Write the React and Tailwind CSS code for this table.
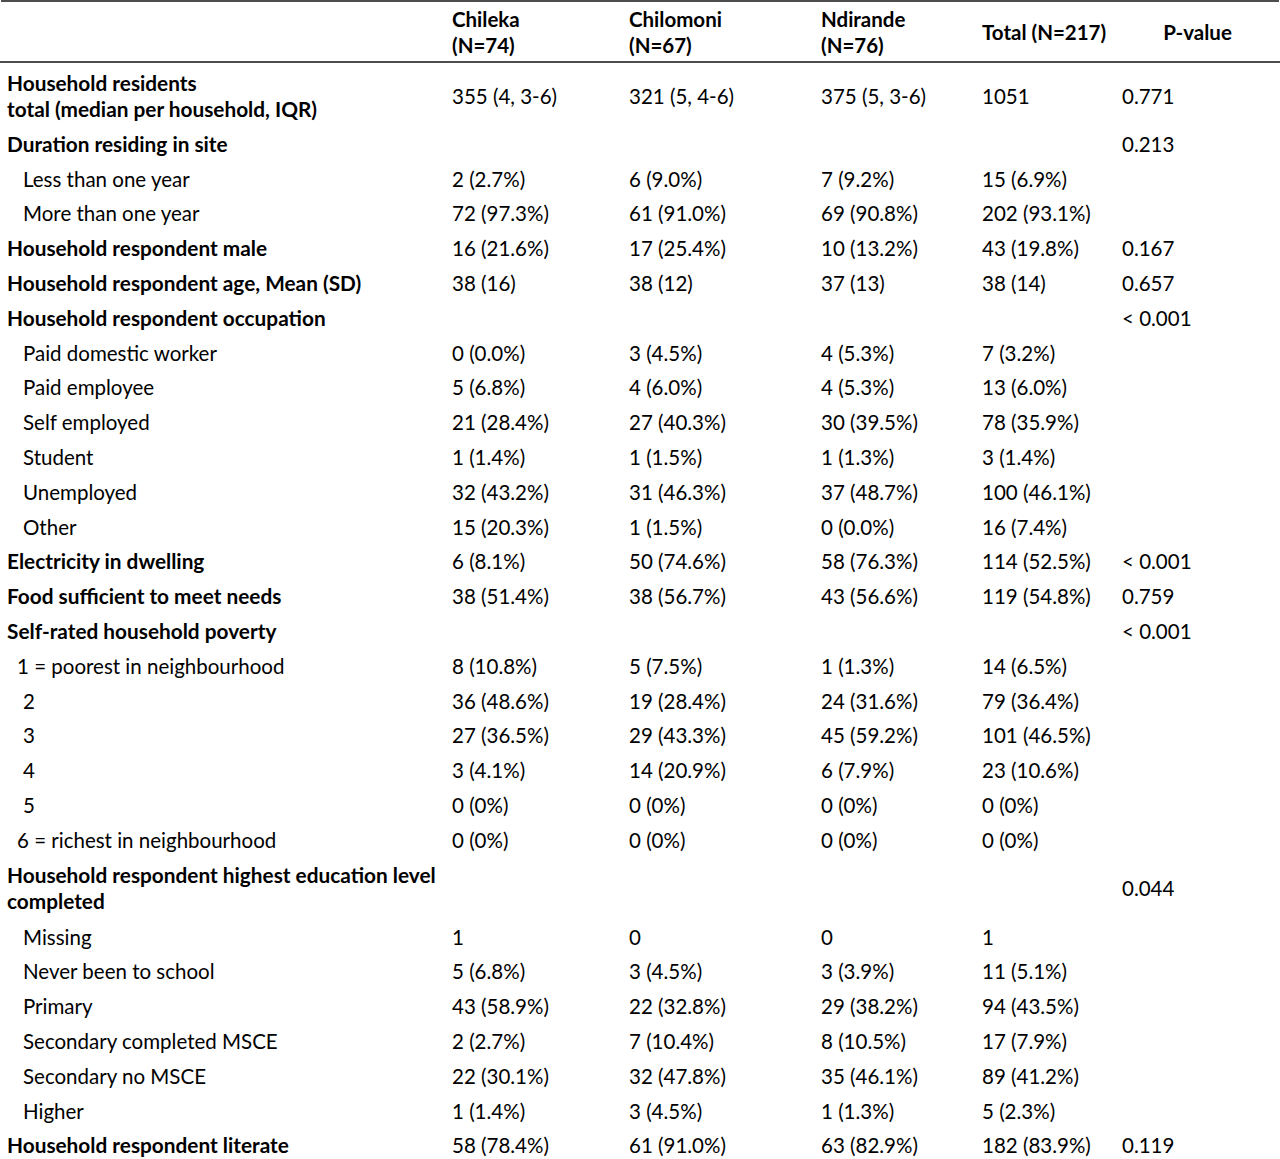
import React from "react";

const cols = ["w-[445px]", "w-[177px]", "w-[192px]", "w-[161px]", "w-[140px]", "w-[165px]"];

// [label, chileka, chilomoni, ndirande, total, p, kind]
// kind: "b" bold section row, "i" indented, "i1" small indent, "b2" bold two-line
const rows = [
  ["Household residents\ntotal (median per household, IQR)", "355 (4, 3-6)", "321 (5, 4-6)", "375 (5, 3-6)", "1051", "0.771", "b2"],
  ["Duration residing in site", "", "", "", "", "0.213", "b"],
  ["Less than one year", "2 (2.7%)", "6 (9.0%)", "7 (9.2%)", "15 (6.9%)", "", "i"],
  ["More than one year", "72 (97.3%)", "61 (91.0%)", "69 (90.8%)", "202 (93.1%)", "", "i"],
  ["Household respondent male", "16 (21.6%)", "17 (25.4%)", "10 (13.2%)", "43 (19.8%)", "0.167", "b"],
  ["Household respondent age, Mean (SD)", "38 (16)", "38 (12)", "37 (13)", "38 (14)", "0.657", "b"],
  ["Household respondent occupation", "", "", "", "", "< 0.001", "b"],
  ["Paid domestic worker", "0 (0.0%)", "3 (4.5%)", "4 (5.3%)", "7 (3.2%)", "", "i"],
  ["Paid employee", "5 (6.8%)", "4 (6.0%)", "4 (5.3%)", "13 (6.0%)", "", "i"],
  ["Self employed", "21 (28.4%)", "27 (40.3%)", "30 (39.5%)", "78 (35.9%)", "", "i"],
  ["Student", "1 (1.4%)", "1 (1.5%)", "1 (1.3%)", "3 (1.4%)", "", "i"],
  ["Unemployed", "32 (43.2%)", "31 (46.3%)", "37 (48.7%)", "100 (46.1%)", "", "i"],
  ["Other", "15 (20.3%)", "1 (1.5%)", "0 (0.0%)", "16 (7.4%)", "", "i"],
  ["Electricity in dwelling", "6 (8.1%)", "50 (74.6%)", "58 (76.3%)", "114 (52.5%)", "< 0.001", "b"],
  ["Food sufficient to meet needs", "38 (51.4%)", "38 (56.7%)", "43 (56.6%)", "119 (54.8%)", "0.759", "b"],
  ["Self-rated household poverty", "", "", "", "", "< 0.001", "b"],
  ["1 = poorest in neighbourhood", "8 (10.8%)", "5 (7.5%)", "1 (1.3%)", "14 (6.5%)", "", "i1"],
  ["2", "36 (48.6%)", "19 (28.4%)", "24 (31.6%)", "79 (36.4%)", "", "i"],
  ["3", "27 (36.5%)", "29 (43.3%)", "45 (59.2%)", "101 (46.5%)", "", "i"],
  ["4", "3 (4.1%)", "14 (20.9%)", "6 (7.9%)", "23 (10.6%)", "", "i"],
  ["5", "0 (0%)", "0 (0%)", "0 (0%)", "0 (0%)", "", "i"],
  ["6 = richest in neighbourhood", "0 (0%)", "0 (0%)", "0 (0%)", "0 (0%)", "", "i1"],
  ["Household respondent highest education level\ncompleted", "", "", "", "", "0.044", "b2"],
  ["Missing", "1", "0", "0", "1", "", "i"],
  ["Never been to school", "5 (6.8%)", "3 (4.5%)", "3 (3.9%)", "11 (5.1%)", "", "i"],
  ["Primary", "43 (58.9%)", "22 (32.8%)", "29 (38.2%)", "94 (43.5%)", "", "i"],
  ["Secondary completed MSCE", "2 (2.7%)", "7 (10.4%)", "8 (10.5%)", "17 (7.9%)", "", "i"],
  ["Secondary no MSCE", "22 (30.1%)", "32 (47.8%)", "35 (46.1%)", "89 (41.2%)", "", "i"],
  ["Higher", "1 (1.4%)", "3 (4.5%)", "1 (1.3%)", "5 (2.3%)", "", "i"],
  ["Household respondent literate", "58 (78.4%)", "61 (91.0%)", "63 (82.9%)", "182 (83.9%)", "0.119", "b"],
];

const Row = ({ r }) => {
  const kind = r[6];
  const tall = kind === "b2";
  const labelPad = kind === "i" ? "pl-[23px]" : kind === "i1" ? "pl-[17px]" : "pl-[7px]";
  return (
    <div className={`flex items-center pt-[3px] ${tall ? "h-[62px]" : "h-[34.8px]"}`}>
      <div className={`${cols[0]} ${labelPad} ${kind.startsWith("b") ? "font-bold text-[20.8px]" : ""} whitespace-pre-line`}>
        {r[0]}
      </div>
      {r.slice(1, 6).map((v, i) => (
        <div key={i} className={`${cols[i + 1]} pl-[7px] whitespace-nowrap`}>
          {v}
        </div>
      ))}
    </div>
  );
};

export default function App() {
  return (
    <div
      className="w-[1280px] bg-white text-black text-[20.5px] leading-[26px]"
      style={{ fontFamily: "Lato, 'Open Sans', sans-serif" }}
    >
      <div className="mx-px border-t-2 border-[#4d4d4d]" />
      <div className="flex items-center h-[61px] border-b-2 border-[#4d4d4d] font-bold">
        <div className={cols[0]} />
        <div className={`${cols[1]} pl-[7px]`}>Chileka<br />(N=74)</div>
        <div className={`${cols[2]} pl-[7px]`}>Chilomoni<br />(N=67)</div>
        <div className={`${cols[3]} pl-[7px]`}>Ndirande<br />(N=76)</div>
        <div className={`${cols[4]} pl-[7px]`}>Total (N=217)</div>
        <div className={`${cols[5]} text-center`}>P-value</div>
      </div>
      {rows.map((r, i) => (
        <Row key={i} r={r} />
      ))}
    </div>
  );
}
